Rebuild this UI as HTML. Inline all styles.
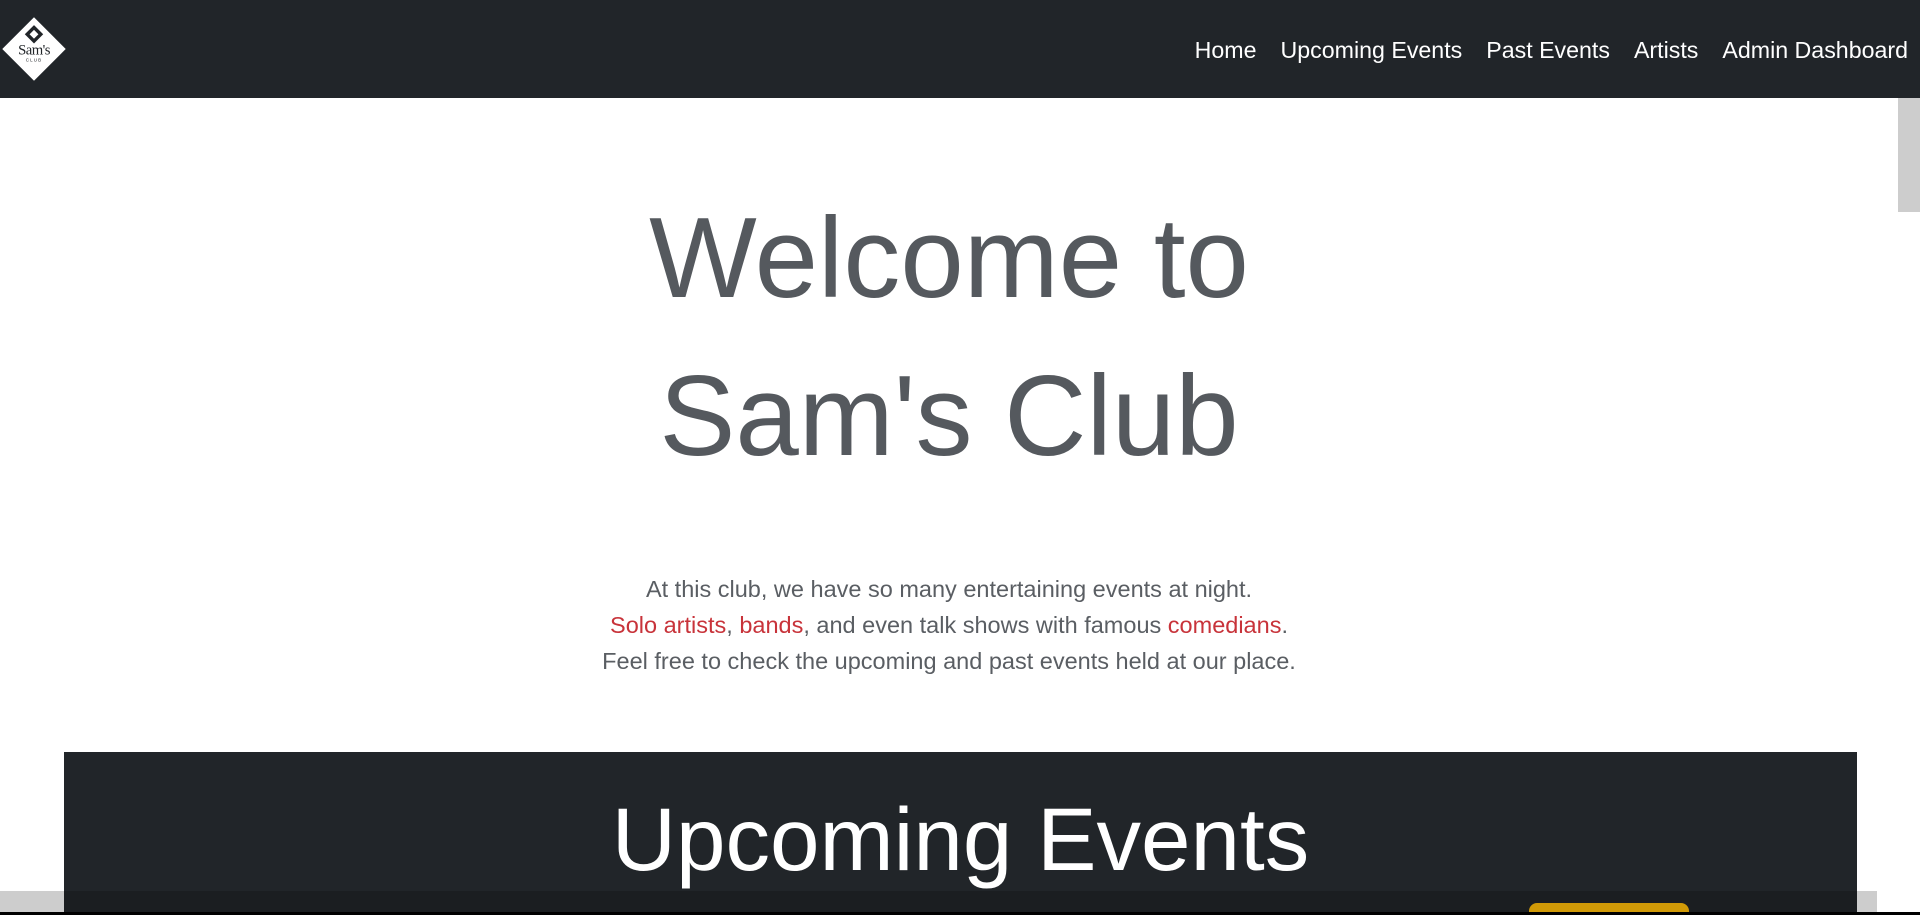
<!DOCTYPE html>
<html><head><meta charset="utf-8"><style>
html,body{margin:0;padding:0;width:1920px;height:915px;overflow:hidden;background:#fff;font-family:"Segoe UI","Liberation Sans",sans-serif;}
.nav{position:absolute;left:0;top:0;width:1920px;height:98px;background:#212529;}
.nav .links{position:absolute;right:12px;top:35px;display:flex;gap:24px;color:#fff;font-size:23.2px;line-height:30px;}
.logo{position:absolute;left:0;top:15px;width:68px;height:68px;}
h1{position:absolute;left:0;width:1898px;top:180px;margin:0;text-align:center;font-weight:300;font-size:114px;line-height:158px;color:#55595e;}
.p{position:absolute;left:0;width:1898px;top:571px;text-align:center;font-size:23.5px;line-height:36px;color:#5a5e63;}
.p span{color:#c8333a}
.dark{position:absolute;left:64px;top:752px;width:1793px;height:163px;background:#212529;}
.dark h2{margin:0;text-align:center;font-weight:300;font-size:89px;line-height:110px;color:#fff;padding-top:32px}
.vs{position:absolute;left:1898px;top:98px;width:22px;height:817px;background:#fff}
.vs div{position:absolute;left:0;top:0;width:22px;height:114px;background:#cdcdcd}
.hs{position:absolute;left:0;top:891px;width:1877px;height:21px;background:#cdcdcd}
.hs .d{position:absolute;left:64px;top:0;width:1793px;height:21px;background:#1b1e21}
.btn{position:absolute;left:1529px;top:903px;width:160px;height:12px;background:#d19a07;border-radius:8px 8px 0 0}
.bl{position:absolute;left:0;top:912px;width:1920px;height:3px;background:#000}
</style></head><body>
<div class="nav">
<svg class="logo" viewBox="0 0 60 60"><polygon points="30,2 58,30 30,58 2,30" fill="#fff"/><polygon points="30,11 36,17 30,23 24,17" fill="none" stroke="#212529" stroke-width="3"/><text x="30" y="35" text-anchor="middle" font-family="Liberation Serif,serif" font-size="13" fill="#212529" letter-spacing="-0.5">Sam's</text><text x="30" y="41" text-anchor="middle" font-family="Liberation Sans,sans-serif" font-size="4" fill="#212529" letter-spacing="1">CLUB</text></svg>
<div class="links"><span>Home</span><span>Upcoming Events</span><span>Past Events</span><span>Artists</span><span>Admin Dashboard</span></div>
</div>
<h1>Welcome to<br>Sam's Club</h1>
<div class="p">At this club, we have so many entertaining events at night.<br><span>Solo artists</span>, <span>bands</span>, and even talk shows with famous <span>comedians</span>.<br>Feel free to check the upcoming and past events held at our place.</div>
<div class="dark"><h2>Upcoming Events</h2></div>
<div class="hs"><div class="d"></div></div>
<div class="btn"></div>
<div class="vs"><div></div></div>
<div class="bl"></div>
</body></html>
